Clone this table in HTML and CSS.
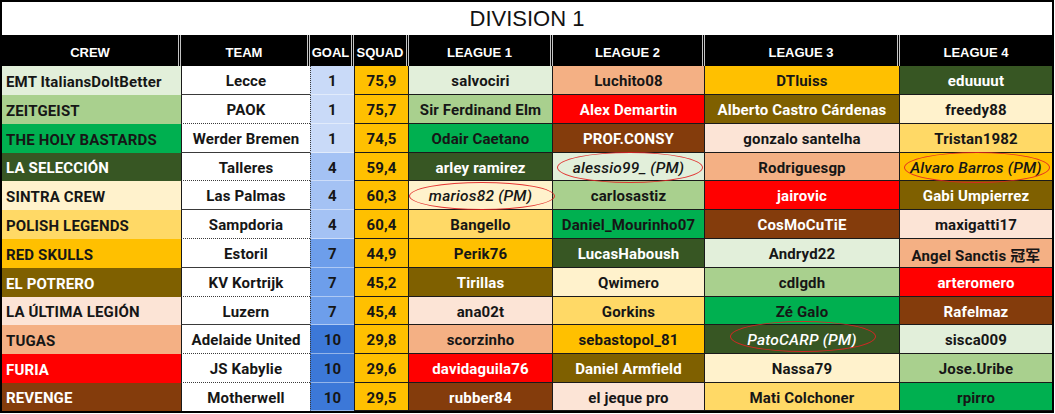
FILE: index.html
```html
<!DOCTYPE html>
<html>
<head>
<meta charset="utf-8">
<link rel="stylesheet" href="styles.css">
</head>
<body>
<div class="sheet">
  <div class="title">DIVISION 1</div>

  <div class="hd">CREW</div>
  <div class="hd">TEAM</div>
  <div class="hd">GOAL</div>
  <div class="hd">SQUAD</div>
  <div class="hd">LEAGUE 1</div>
  <div class="hd">LEAGUE 2</div>
  <div class="hd">LEAGUE 3</div>
  <div class="hd last">LEAGUE 4</div>

  <div class="crew c-pg">EMT ItaliansDoltBetter</div>
  <div class="team sl">Lecce</div>
  <div class="goal g1">1</div>
  <div class="squad">75,9</div>
  <div class="lg c-pg">salvociri</div>
  <div class="lg c-pe">Luchito08</div>
  <div class="lg c-gd">DTluiss</div>
  <div class="lg c-dg">eduuuut</div>

  <div class="crew c-lg">ZEITGEIST</div>
  <div class="team">PAOK</div>
  <div class="goal g1">1</div>
  <div class="squad">75,7</div>
  <div class="lg c-lg">Sir Ferdinand Elm</div>
  <div class="lg c-rd">Alex Demartin</div>
  <div class="lg c-ol">Alberto Castro Cárdenas</div>
  <div class="lg c-cr">freedy88</div>

  <div class="crew c-g">THE HOLY BASTARDS</div>
  <div class="team sl">Werder Bremen</div>
  <div class="goal g1">1</div>
  <div class="squad">74,5</div>
  <div class="lg c-g">Odair Caetano</div>
  <div class="lg c-br">PROF.CONSY</div>
  <div class="lg c-lp">gonzalo santelha</div>
  <div class="lg c-ly">Tristan1982</div>

  <div class="crew c-dg">LA SELECCIÓN</div>
  <div class="team">Talleres</div>
  <div class="goal g4">4</div>
  <div class="squad">59,4</div>
  <div class="lg c-dg">arley ramirez</div>
  <div class="lg c-pg pm">alessio99_ (PM)</div>
  <div class="lg c-pe">Rodriguesgp</div>
  <div class="lg c-gd pm">Alvaro Barros (PM)</div>

  <div class="crew c-cr">SINTRA CREW</div>
  <div class="team sl">Las Palmas</div>
  <div class="goal g4">4</div>
  <div class="squad">60,3</div>
  <div class="lg c-cr pm pm-low">marios82 (PM)</div>
  <div class="lg c-lg">carlosastiz</div>
  <div class="lg c-rd">jairovic</div>
  <div class="lg c-ol">Gabi Umpierrez</div>

  <div class="crew c-ly">POLISH LEGENDS</div>
  <div class="team">Sampdoria</div>
  <div class="goal g4">4</div>
  <div class="squad">60,4</div>
  <div class="lg c-ly">Bangello</div>
  <div class="lg c-g">Daniel_Mourinho07</div>
  <div class="lg c-br">CosMoCuTiE</div>
  <div class="lg c-lp">maxigatti17</div>

  <div class="crew c-gd">RED SKULLS</div>
  <div class="team sl">Estoril</div>
  <div class="goal g7">7</div>
  <div class="squad">44,9</div>
  <div class="lg c-gd">Perik76</div>
  <div class="lg c-dg">LucasHaboush</div>
  <div class="lg c-pg">Andryd22</div>
  <div class="lg c-pe">Angel Sanctis 冠军</div>

  <div class="crew c-ol">EL POTRERO</div>
  <div class="team">KV Kortrijk</div>
  <div class="goal g7">7</div>
  <div class="squad">45,2</div>
  <div class="lg c-ol">Tirillas</div>
  <div class="lg c-cr">Qwimero</div>
  <div class="lg c-lg">cdlgdh</div>
  <div class="lg c-rd">arteromero</div>

  <div class="crew c-lp">LA ÚLTIMA LEGIÓN</div>
  <div class="team sl">Luzern</div>
  <div class="goal g7">7</div>
  <div class="squad">45,4</div>
  <div class="lg c-lp">ana02t</div>
  <div class="lg c-ly">Gorkins</div>
  <div class="lg c-g">Zé Galo</div>
  <div class="lg c-br">Rafelmaz</div>

  <div class="crew c-pe">TUGAS</div>
  <div class="team">Adelaide United</div>
  <div class="goal g10">10</div>
  <div class="squad">29,8</div>
  <div class="lg c-pe">scorzinho</div>
  <div class="lg c-gd">sebastopol_81</div>
  <div class="lg c-dg pm pm-high">PatoCARP (PM)</div>
  <div class="lg c-pg">sisca009</div>

  <div class="crew c-rd">FURIA</div>
  <div class="team">JS Kabylie</div>
  <div class="goal g10">10</div>
  <div class="squad">29,6</div>
  <div class="lg c-rd">davidaguila76</div>
  <div class="lg c-ol">Daniel Armfield</div>
  <div class="lg c-cr">Nassa79</div>
  <div class="lg c-lg">Jose.Uribe</div>

  <div class="crew c-br">REVENGE</div>
  <div class="team end">Motherwell</div>
  <div class="goal g10">10</div>
  <div class="squad">29,5</div>
  <div class="lg c-br">rubber84</div>
  <div class="lg c-lp">el jeque pro</div>
  <div class="lg c-ly">Mati Colchoner</div>
  <div class="lg c-g">rpirro</div>
</div>
</body>
</html>
```

FILE: styles.css
```css
* { box-sizing: border-box; }

html, body {
  margin: 0;
  padding: 0;
  background: #fff;
}

.sheet {
  width: 1054px;
  border: 2px solid #000;
  display: grid;
  grid-template-columns: 179px 129px 44px 55px 144px 152px 195px 152px;
  grid-template-rows: 33px 31px 29px 29px 29px 28px 29px 29px 29px 29px 28px 29px 29px 28px;
  font-family: Roboto, "Liberation Sans", "Noto Sans CJK SC", sans-serif;
  font-weight: 700;
  font-size: 15px;
  letter-spacing: 0.15px;
  color: #161616;
}

.title {
  grid-column: 1 / -1;
  display: flex;
  align-items: center;
  justify-content: center;
  font-family: "Liberation Sans", Arial, sans-serif;
  font-weight: 400;
  font-size: 22px;
  letter-spacing: 0;
  color: #121212;
  background: #fff;
  padding-top: 1px;
}

.hd {
  background: #000;
  color: #fff;
  font-family: "Liberation Sans", Arial, sans-serif;
  font-weight: 700;
  font-size: 13px;
  letter-spacing: 0;
  display: flex;
  align-items: center;
  justify-content: center;
  padding-top: 3px;
  border-right: 3px double #c4c4c4;
  white-space: nowrap;
}
.hd.last { border-right: none; }

.crew, .team, .goal, .squad, .lg {
  display: flex;
  align-items: center;
  white-space: nowrap;
  padding-top: 2px;
}

.crew {
  padding-left: 4px;
}

.team, .goal, .squad, .lg {
  justify-content: center;
}

.team {
  background: #fff;
  border-left: 1px solid #1a1a1a;
  border-bottom: 1px dotted #3a3a3a;
}
.team.sl { border-bottom: 1px solid #3a3a3a; }
.team.end { border-bottom: none; }

.goal {
  border-left: 1px dotted #3a3a3a;
  border-bottom: 1px solid rgba(255, 255, 255, 0.45);
}
.g1 { background: #c9daf8; }
.g4 { background: #a4c2f4; }
.g7 { background: #6d9eeb; }
.g10 { background: #3c78d8; }

.squad {
  background: #ffc000;
  border-left: 1px solid #1a1a1a;
  border-right: 1px solid #1a1a1a;
  border-bottom: 1px solid #1a1a1a;
}

.lg {
  border-right: 1px solid #1a1a1a;
  border-bottom: 1px solid #1a1a1a;
}
.lg:nth-child(8n+1) { border-right: none; }

.c-pg { background: #e2efda; }
.c-lg { background: #a9d08e; }
.c-g  { background: #00b050; }
.c-dg { background: #375623; color: #fff; }
.c-cr { background: #fff2cc; }
.c-ly { background: #ffd966; }
.c-gd { background: #ffc000; }
.c-ol { background: #7f6000; color: #fff; }
.c-lp { background: #fce4d6; }
.c-pe { background: #f4b084; }
.c-rd { background: #ff0000; color: #fff; }
.c-br { background: #843c0c; color: #fff; }

.pm {
  position: relative;
  font-style: italic;
  font-weight: 500;
  font-size: 15.5px;
  letter-spacing: 0.2px;
}
.pm::after {
  content: "";
  position: absolute;
  left: 50%;
  top: 50%;
  width: 144px;
  height: 29px;
  margin-left: -72px;
  margin-top: -15px;
  border: 1.4px solid rgba(225, 35, 35, 0.9);
  border-radius: 50%;
}
.pm-low::after { height: 26px; margin-top: -13px; }
.pm-high::after { margin-top: -18px; }
```
